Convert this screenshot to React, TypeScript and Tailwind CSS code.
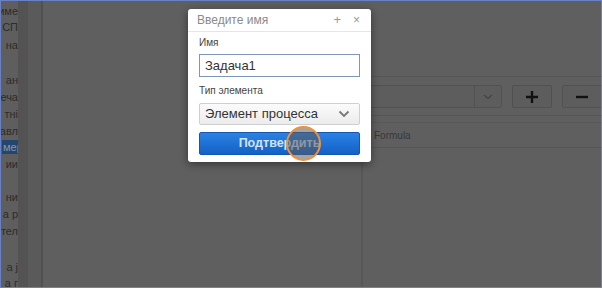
import React from 'react'

const leftLines: {text: string; top: number; active?: boolean}[] = [
    {text: "име", top: 3},
    {text: "СП", top: 19},
    {text: "на", top: 37},
    {text: "ан", top: 72},
    {text: "еча", top: 89},
    {text: "тні", top: 106},
    {text: "авл", top: 123},
    {text: "мер", top: 139, active: true},
    {text: "ии", top: 156},
    {text: "ни", top: 189},
    {text: "а р", top: 206},
    {text: "тел", top: 223},
    {text: "а ј", top: 259},
    {text: "а г", top: 275},
]

function LeftColumn() {
    return (
        <div className="relative w-[17px] shrink-0 overflow-hidden bg-[#5e5e5e]">
            {leftLines.map((l) => (
                <div
                    key={l.top}
                    className={`absolute right-0 h-[14px] leading-[14px] text-[11px] whitespace-nowrap pl-[1px] ${l.active ? "bg-[#23466f] text-[#8b98a8] w-[16px]" : "text-[#2c2c2c]"}`}
                    style={{top: l.top}}
                >
                    {l.text}
                </div>
            ))}
        </div>
    )
}

function Dialog() {
    return (
        <div className="absolute left-[187px] top-[8px] w-[183px] h-[153px] bg-white rounded-[3px] shadow-[0_2px_8px_rgba(0,0,0,0.45)] flex flex-col">
            <div className="h-[23px] flex items-center px-[9px] border-b border-[#e6e6e6] text-[12px] text-[#8a8a8a]">
                <span className="flex-1">Введите имя</span>
                <span className="text-[13px] mr-[12px] text-[#9a9a9a]">+</span>
                <span className="text-[12px] mr-[2px] text-[#9a9a9a]">×</span>
            </div>
            <div className="px-[11px] pt-[5px] flex flex-col">
                <div className="text-[10px] text-[#444] leading-[12px]">Имя</div>
                <div className="mt-[5px] h-[23px] border border-[#7e97b8] flex items-center px-[5px] text-[13px] text-[#333]">
                    Задача1
                </div>
                <div className="mt-[8px] text-[10px] text-[#444] leading-[12px]">Тип элемента</div>
                <div className="mt-[6px] h-[22px] border border-[#cfcfcf] rounded-[2px] bg-gradient-to-b from-[#fbfbfb] to-[#ececec] flex items-center px-[5px] text-[13px] text-[#333]">
                    <span className="flex-1">Элемент процесса</span>
                    <svg width="12" height="8" viewBox="0 0 12 8" className="mr-[4px]">
                        <path d="M1.5 1.5 L6 6 L10.5 1.5" fill="none" stroke="#777" strokeWidth="1.8" />
                    </svg>
                </div>
                <div className="mt-[7px] h-[23px] rounded-[2px] bg-gradient-to-b from-[#2a82e4] to-[#1461c6] border border-[#1457b0] flex items-center justify-center text-[12.5px] font-bold text-[#d4e2f5]">
                    Подтвердить
                </div>
            </div>
        </div>
    )
}

function RightPanel() {
    return (
        <div className="flex-1 flex flex-col">
            <div className="h-[76px] border-b border-[#555]" />
            <div className="h-[38px] flex items-center gap-[10px] pl-[8px] pt-[1px]">
                <div className="w-[134px] h-[23px] border border-[#515151] rounded-[2px] bg-[#5d5d5d] flex">
                    <div className="flex-1" />
                    <div className="w-[27px] border-l border-[#515151] flex items-center justify-center">
                        <svg width="10" height="6" viewBox="0 0 10 6">
                            <path d="M1 1 L5 4.5 L9 1" fill="none" stroke="#444" strokeWidth="1.3" />
                        </svg>
                    </div>
                </div>
                <div className="w-[40px] h-[23px] border border-[#515151] rounded-[2px] bg-[#5d5d5d] flex items-center justify-center">
                    <svg width="14" height="14" viewBox="0 0 14 14">
                        <path d="M7 1 V13 M1 7 H13" stroke="#111" strokeWidth="2.4" />
                    </svg>
                </div>
                <div className="w-[40px] h-[23px] border border-[#515151] rounded-[2px] bg-[#5d5d5d] flex items-center justify-center">
                    <svg width="14" height="14" viewBox="0 0 14 14">
                        <path d="M1 7 H13" stroke="#111" strokeWidth="2.4" />
                    </svg>
                </div>
            </div>
            <div className="h-[7px] border-t border-[#555]" />
            <div className="h-[25px] border-t border-[#585858] flex items-center pl-[14px] text-[10px] text-[#383838]">
                Formula
            </div>
            <div className="flex-1 border-t border-[#555] border-l-[2px] border-l-[#575757] ml-[1px]" />
        </div>
    )
}

export default function App() {
    return (
        <div className="relative w-[602px] h-[288px] overflow-hidden border border-[#6a80c6] bg-[#5f5f5f] flex font-['Liberation_Sans',Arial,sans-serif]">
            <LeftColumn />
            <div className="w-[10px] shrink-0 bg-[#535353]" />
            <div className="w-[13px] shrink-0 bg-[#5a5a5a]" />
            <div className="w-[2px] shrink-0 bg-[#505050]" />
            <div className="w-[317px] shrink-0" />
            <RightPanel />
            <Dialog />
            <div className="absolute left-[285px] top-[125px] w-[35px] h-[35px] rounded-full border-2 border-[#f0903a] bg-[rgba(90,90,90,0.55)]" />
        </div>
    )
}
